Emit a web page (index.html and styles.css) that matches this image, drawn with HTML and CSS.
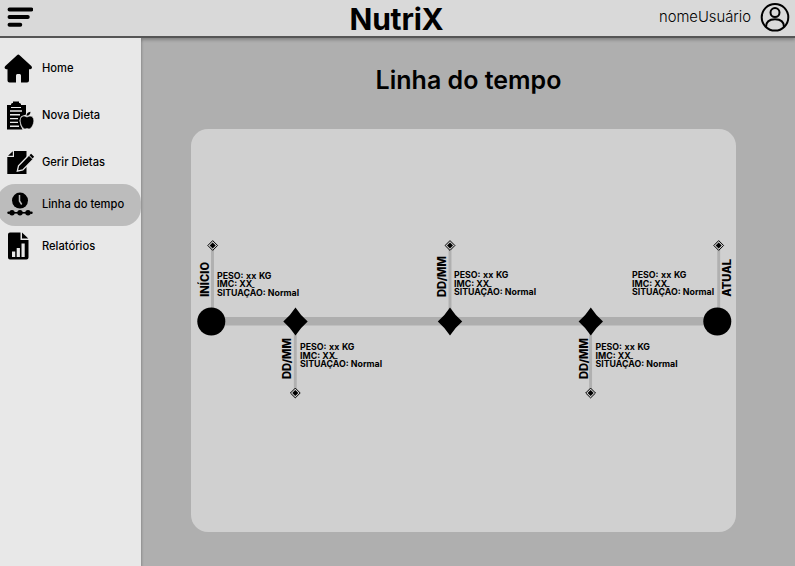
FILE: index.html
```html
<!DOCTYPE html>
<html lang="pt-BR">
<head>
<meta charset="utf-8">
<title>NutriX</title>
<link rel="stylesheet" href="styles.css">
</head>
<body>
<header class="topbar">
  <svg class="menu" width="28" height="22" viewBox="0 0 28 22"><path d="M4.500 3.500H26.300M4.500 11H22.800M4.500 18.800H15.300" stroke="#000" stroke-width="3.900" stroke-linecap="round"/></svg>
  <div class="brand">NutriX</div>
  <div class="user">
    <span>nomeUsuário</span>
    <svg width="30" height="30" viewBox="0 0 30 30" fill="none" stroke="#000" stroke-width="2"><circle cx="15" cy="15.300" r="13.300"/><circle cx="15" cy="10.600" r="4.500"/><path d="M6 25C6 20 9.400 17.300 15 17.300s9 2.700 9 7.700"/></svg>
  </div>
</header>
<div class="layout">
  <nav class="sidebar">
    <a class="item home"><svg class="icon" viewBox="0 0 36 36"><path d="M17 5.200q1.300-1.200 2.600 0L31.300 16q1.800 2.400-1 3.200H29V30.500q0 2-2 2H21V25.500q0-1.500-1.300-1.500H17.300Q16 24 16 25.500v7H9.500q-2 0-2-2V19.200H6.300q-2.800-.8-1-3.200Z"/></svg><span>Home</span></a>
    <a class="item nova"><svg class="icon" viewBox="0 0 36 36"><path d="M7 8h4v3h10V8h5v9.500l-5 2-1.500 4 1 5 2 4H7Z"/><path d="M11 10V7.500q0-1.500 1.500-1.500H13V4.500h6V6h.5Q21 6 21 7.500V10Z"/><path d="M10 14H22M10 17.800H20M10 21.600H18M10 25.400H18M10 29.200H19" stroke="#e8e8e8" stroke-width="1.400"/><path d="M27 20q-5-2.800-6.500 1.500c-1.300 4 2 10.500 4.500 10.500q2-.8 4 0c2.500 0 6-6.500 4.400-10.500Q32 17.600 27 20Z" stroke="#e8e8e8" stroke-width=".6"/><path d="M26.500 18.800q0-3.500 4-4-.2 3.800-4 4"/></svg><span>Nova Dieta</span></a>
    <a class="item gerir"><svg class="icon" viewBox="0 0 36 36"><path d="M14 7H26.500V30H7.300V13H14Z"/><path d="M8 11.800 12.800 7.200V11.800Z"/><path d="m17.300 27.200 1.200-5.500L29 11l4.300 4.300L22.800 26Z" stroke="#e8e8e8" stroke-width="1.300"/><path d="m29.500 11.300 1.600-1.500 3 3-1.600 1.700Z"/></svg><span>Gerir Dietas</span></a>
    <a class="item active"><svg class="icon" viewBox="0 0 36 36"><circle cx="20" cy="14.600" r="8"/><path d="M19.500 9v6l2.200 3.500" fill="none" stroke="#bcbcbc" stroke-width="1.500"/><path d="M8 26.800H32" stroke="#000" stroke-width="1.600"/><circle cx="12" cy="26.800" r="2.700"/><circle cx="20" cy="26.800" r="2.700"/><circle cx="28" cy="26.800" r="2.700"/><circle cx="8.500" cy="26.800" r="1.200"/><circle cx="31.500" cy="26.800" r="1.200"/></svg><span>Linha do tempo</span></a>
    <a class="item last"><svg class="icon" viewBox="0 0 36 36"><path d="M10 4.500H20.500V12H28.500V29.500q0 2-2 2H10q-2 0-2-2V6.500q0-2 2-2Z"/><path d="m22 4.500 6.300 6H22Z"/><path d="M12 23.500h3.200v5.500H12Zm4.700-3.500h3.200v9h-3.200Zm4.800-4.500h3.200V29h-3.200Z" fill="#e8e8e8"/></svg><span>Relatórios</span></a>
  </nav>
  <main class="content">
    <h1>Linha do tempo</h1>
    <section class="timeline">
      <svg class="chart" width="545" height="403" viewBox="0 0 545 403">
        <defs>
          <path id="star" d="M0-14Q4.800-6.500 12.200 0Q4.800 6.500 0 14Q-4.800 6.500-12.200 0Q-4.800-6.500 0-14Z"/>
          <g id="pin"><path d="M0-4.900 4.900 0 0 4.900-4.900 0Z" fill="#d0d0d0" stroke="#000" stroke-width="1"/><path d="M0-3 3 0 0 3-3 0Z"/></g>
        </defs>
        <path d="M20 192.300H526" stroke="#aeaeae" stroke-width="8.600"/>
        <path d="M21.500 117V185M104.300 199V264M259 117V185M399.600 199V264M527.700 117V185" stroke="#b0b0b0" stroke-width="2.900"/>
        <circle cx="20.300" cy="192.500" r="14"/><circle cx="526.300" cy="192.500" r="14"/>
        <use href="#star" x="104.500" y="192.500"/><use href="#star" x="259" y="192.500"/><use href="#star" x="399.800" y="192.500"/>
        <use href="#pin" x="21.700" y="116.500"/><use href="#pin" x="104.300" y="264"/><use href="#pin" x="259" y="116.500"/><use href="#pin" x="399.600" y="264"/><use href="#pin" x="527.700" y="116.500"/>
      </svg>
      <div class="date d1">INÍCIO</div><div class="info i1"><span class="peso">PESO: xx KG</span><br>IMC: XX<br>SITUAÇÃO: Normal</div>
      <div class="date d2">DD/MM</div><div class="info i2"><span class="peso">PESO: xx KG</span><br>IMC: XX<br>SITUAÇÃO: Normal</div>
      <div class="date d3">DD/MM</div><div class="info i3"><span class="peso">PESO: xx KG</span><br>IMC: XX<br>SITUAÇÃO: Normal</div>
      <div class="date d4">DD/MM</div><div class="info i4"><span class="peso">PESO: xx KG</span><br>IMC: XX<br>SITUAÇÃO: Normal</div>
      <div class="date d5">ATUAL</div><div class="info i5"><span class="peso">PESO: xx KG</span><br>IMC: XX<br>SITUAÇÃO: Normal</div>
    </section>
  </main>
</div>
</body>
</html>
```
FILE: styles.css
```css
* { box-sizing: border-box; }
body { margin: 0; height: 566px; overflow: hidden; display: flex; flex-direction: column; font-family: Inter, sans-serif; color: #000; background: #afafaf; }
.topbar { position: relative; height: 38px; flex: none; display: grid; grid-template-columns: 1fr auto 1fr; align-items: start; padding: 0 5px; background: #d9d9d9; border-bottom: 2px solid #555; box-shadow: 0 2px 3px rgba(0,0,0,.25); }
.menu { display: block; margin-top: 6px; }
.brand { font-size: 30px; line-height: 36px; font-weight: 700; padding-top: 1px; letter-spacing: -.2px; margin-right: 2px; }
.user { display: flex; align-items: center; justify-content: flex-end; gap: 9px; margin-top: 2px; font-size: 14.800px; font-weight: 300; }
.user span { margin-top: -1px; }
.user svg { display: block; }
.layout { flex: 1; display: flex; min-height: 0; }
.sidebar { position: relative; width: 141px; flex: none; padding-top: 7px; background: #e8e8e8; box-shadow: 1px 1px 2px rgba(0,0,0,.2); clip-path: inset(0 -4px 0 0); }
.item { display: flex; align-items: center; height: 42px; gap: 6px; font-size: 11.150px; font-weight: 500; white-space: nowrap; }
.icon { width: 36px; height: 36px; flex: none; display: block; }
.home { height: 47px; padding-bottom: 2px; }
.nova { height: 46px; }
.gerir { height: 46px; padding-top: 1px; }
.active { background: #bcbcbc; border-radius: 18px; margin-left: -3px; padding: 0 0 2px 3px; }
.last { padding-bottom: 2px; }
.content { flex: 1; display: flex; flex-direction: column; align-items: center; padding-right: 9px; }
h1 { margin: 24px 0 0; padding-left: 10px; font-size: 25px; line-height: 36px; font-weight: 600; }
.timeline { position: relative; width: 545px; height: 403px; margin-top: 31px; border-radius: 17px; background: #d0d0d0; }
.chart { display: block; }
.date { position: absolute; writing-mode: vertical-rl; transform: rotate(180deg); font-size: 11.100px; line-height: 14px; font-weight: 800; white-space: nowrap; }
.info { position: absolute; font-size: 8.800px; line-height: 8.500px; font-weight: 700; white-space: nowrap; }
.peso { word-spacing: .5px; }
.d1 { left: 7px; bottom: 235px; }
.d2 { left: 89px; bottom: 153px; }
.d3 { left: 244px; bottom: 235px; }
.d4 { left: 386px; bottom: 153px; }
.d5 { left: 529px; bottom: 235px; }
.i1 { left: 26px; top: 142.500px; }
.i2 { left: 109px; top: 214px; }
.i3 { left: 263px; top: 142px; }
.i4 { left: 404.500px; top: 214px; }
.i5 { left: 441px; top: 142px; }
```
